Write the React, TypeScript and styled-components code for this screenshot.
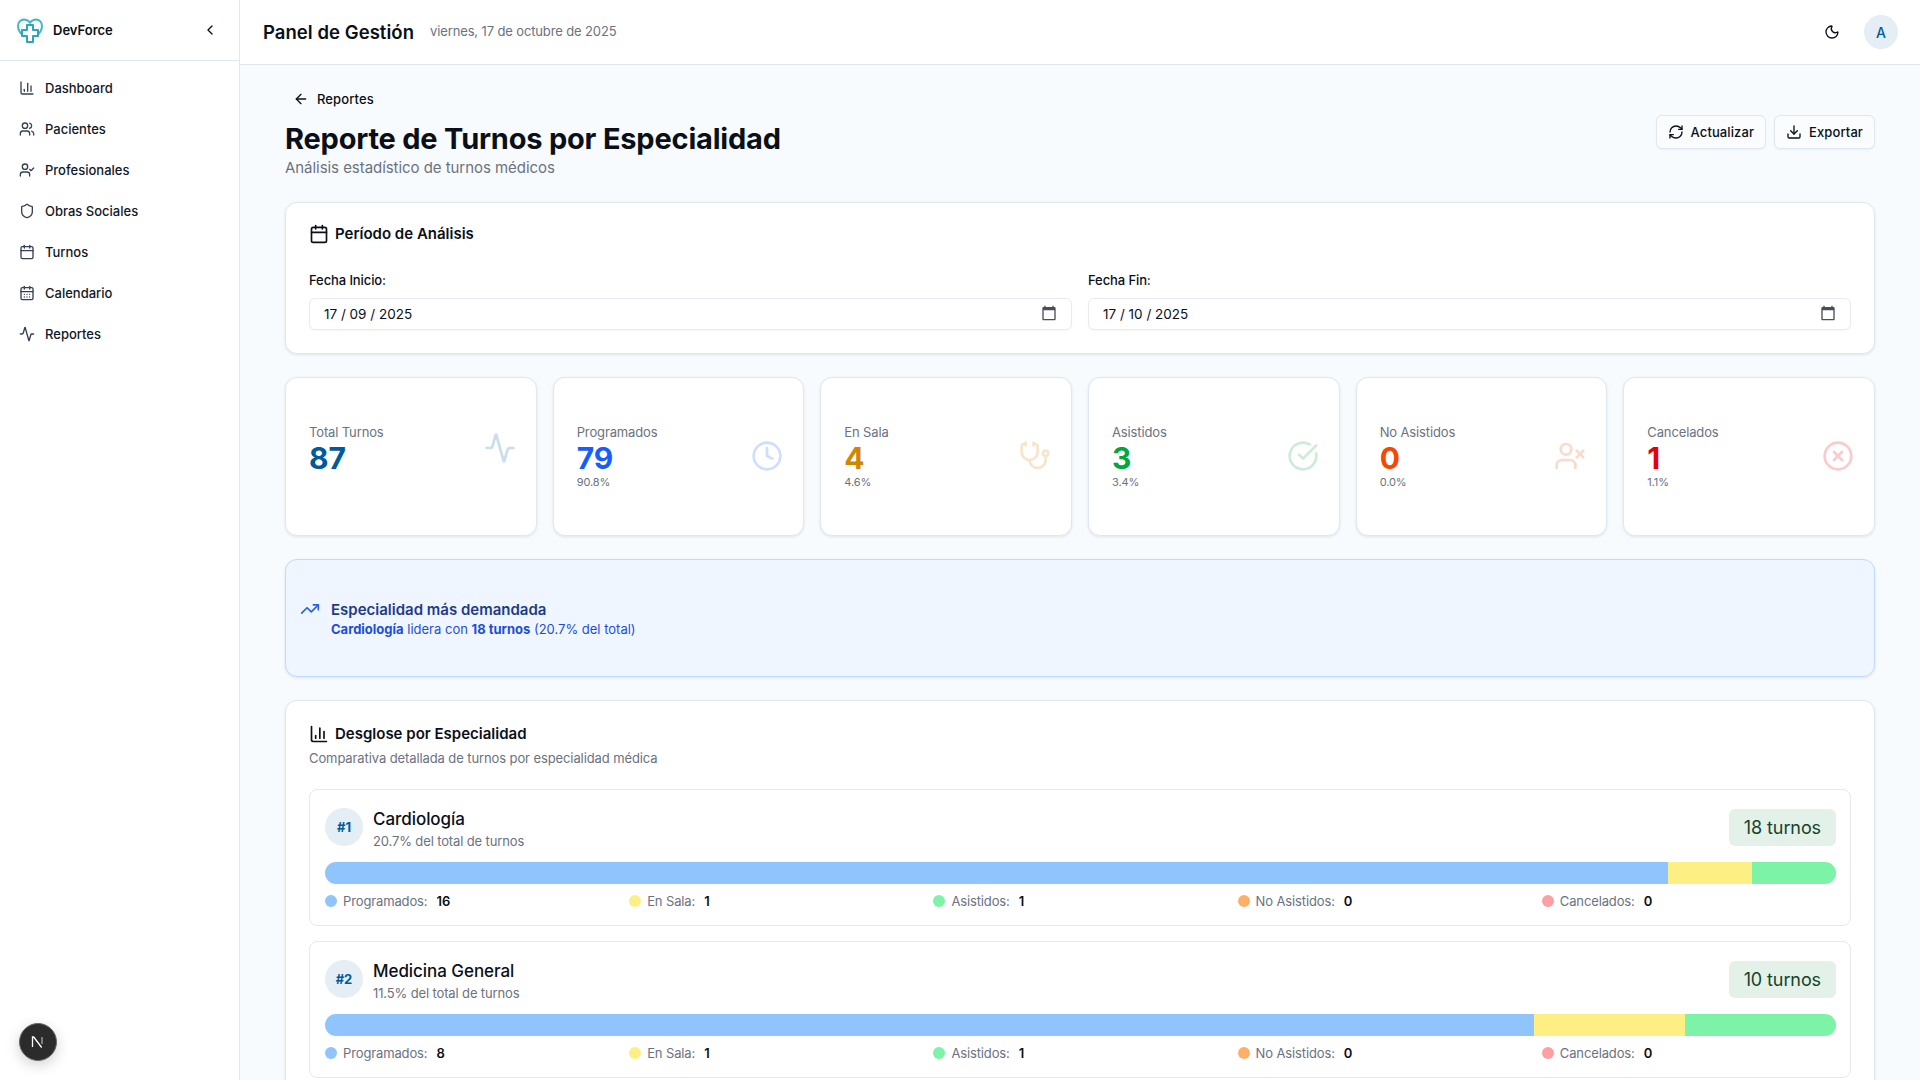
import React from 'react';
import styled, { createGlobalStyle } from 'styled-components';
import {
  Activity,
  ArrowLeft,
  Calendar,
  CalendarDays,
  ChartColumn,
  ChevronLeft,
  CircleCheckBig,
  CircleX,
  Clock,
  Download,
  LucideIcon,
  Moon,
  RefreshCw,
  Shield,
  Stethoscope,
  TrendingUp,
  UserCheck,
  Users,
  UserX,
} from 'lucide-react';

const GlobalStyle = createGlobalStyle`
  html, body {
    margin: 0;
    height: 100%;
    overflow: hidden;
    background: #f8fbfe;
    font-family: Inter, "Liberation Sans", sans-serif;
    color: #0a0f18;
  }
  * {
    box-sizing: border-box;
  }
`;

const Layout = styled.div`
  display: flex;
  height: 100vh;
  overflow: hidden;
`;

const Sidebar = styled.aside`
  flex: 0 0 240px;
  background: #fff;
  border-right: 1px solid #dfe7ef;
`;

const Brand = styled.div`
  height: 61px;
  padding: 0 21px 1px 16px;
  display: flex;
  align-items: center;
  border-bottom: 1px solid #dfe7ef;
`;

const BrandName = styled.span`
  margin-left: 9px;
  font-size: 13px;
  font-weight: 600;
  flex: 1;
`;

const Nav = styled.nav`
  padding: 8px;
  display: flex;
  flex-direction: column;
  gap: 4px;
`;

const NavItem = styled.a`
  height: 37px;
  padding: 0 11px;
  display: flex;
  align-items: center;
  gap: 10px;
  font-size: 13px;
  font-weight: 500;
  color: #111827;
`;

const Main = styled.div`
  flex: 1;
  min-width: 0;
  display: flex;
  flex-direction: column;
`;

const Topbar = styled.header`
  flex: 0 0 65px;
  padding: 0 22px 0 23px;
  background: #fff;
  border-bottom: 1px solid #dfe7ef;
  display: flex;
  align-items: center;
`;

const TopTitle = styled.h1`
  margin: 0;
  font-size: 18.5px;
  letter-spacing: 0.05px;
  line-height: 28px;
  font-weight: 600;
`;

const TopDate = styled.span`
  margin: -2px 0 0 16px;
  font-size: 13px;
  letter-spacing: -0.13px;
  color: #6b7280;
  flex: 1;
`;

const Avatar = styled.div`
  margin-left: 24px;
  width: 34px;
  height: 34px;
  border-radius: 50%;
  background: #e5edf5;
  color: #005a9c;
  display: flex;
  align-items: center;
  justify-content: center;
  font-size: 14px;
  font-weight: 500;
`;

const Content = styled.main`
  flex: 1;
  overflow: hidden;
  padding: 18px 45px 24px;
  display: flex;
  flex-direction: column;
  gap: 23px;

  & > * {
    flex-shrink: 0;
  }
`;

const PageHead = styled.div`
  margin-bottom: -1px;
  display: flex;
  align-items: center;
  justify-content: space-between;
`;

const BackLink = styled.a`
  width: fit-content;
  height: 32px;
  padding: 0 8px;
  display: flex;
  align-items: center;
  gap: 8px;
  font-size: 13px;
  letter-spacing: 0.1px;
  font-weight: 500;
`;

const PageTitle = styled.h2`
  margin: 6px 0 -1px;
  font-size: 29px;
  letter-spacing: -0.2px;
  line-height: 36px;
  font-weight: 700;
`;

const PageSub = styled.p`
  margin: 0;
  font-size: 15px;
  letter-spacing: -0.05px;
  line-height: 24px;
  color: #6b7280;
`;

const Actions = styled.div`
  display: flex;
  gap: 8px;
`;

const Button = styled.button`
  height: 34px;
  padding: 0 11px;
  display: inline-flex;
  align-items: center;
  gap: 7px;
  font: 500 13px Inter, sans-serif;
  letter-spacing: 0.1px;
  color: #0a0f18;
  background: #fafcfe;
  border: 1px solid #dfe7ef;
  border-radius: 6px;
  box-shadow: 0 1px 2px rgba(0, 0, 0, 0.05);
`;

const Card = styled.section`
  background: #fff;
  border: 1px solid #dfe7ef;
  border-radius: 12px;
  box-shadow: 0 1px 3px rgba(15, 40, 70, 0.1);
`;

const PeriodCard = styled(Card)`
  padding: 21px 23px 23px;
`;

const CardTitle = styled.h3`
  margin: 0;
  display: flex;
  align-items: center;
  gap: 6px;
  font-size: 15px;
  line-height: 16px;
  font-weight: 600;
`;

const DateGrid = styled.div`
  margin-top: 29px;
  display: grid;
  grid-template-columns: 1fr 1fr;
  gap: 16px;
`;

const DateLabel = styled.label`
  display: block;
  font-size: 13px;
  letter-spacing: -0.1px;
  line-height: 14px;
  font-weight: 500;
  margin-bottom: 11px;
`;

const DateInput = styled.div`
  height: 32px;
  padding: 0 14px;
  display: flex;
  align-items: center;
  justify-content: space-between;
  font-size: 13.5px;
  background: #fff;
  border: 1px solid #e6ecf2;
  border-radius: 6px;
  box-shadow: 0 1px 2px rgba(0, 0, 0, 0.04);

  svg {
    margin-top: -2px;
  }
`;

const StatGrid = styled.div`
  display: grid;
  grid-template-columns: repeat(6, 1fr);
  gap: 16px;
`;

const StatCard = styled(Card)`
  height: 159px;
  padding: 44px 20px 0 23px;
`;

const StatRow = styled.div`
  display: flex;
  align-items: center;
  justify-content: space-between;
`;

const StatLabel = styled.div`
  font-size: 13px;
  letter-spacing: -0.13px;
  line-height: 20px;
  color: #6b7280;
`;

const StatValue = styled.div<{ $color: string }>`
  font-size: 30px;
  line-height: 32px;
  font-weight: 700;
  color: ${({ $color }) => $color};
`;

const StatPct = styled.div`
  font-size: 11px;
  letter-spacing: -0.1px;
  line-height: 16px;
  color: #6b7280;
`;

const StatIcon = styled.span<{ $color: string }>`
  display: flex;
  color: ${({ $color }) => $color};
  opacity: 0.2;
`;

const Highlight = styled.section`
  height: 118px;
  padding: 0 14px;
  display: flex;
  align-items: center;
  gap: 11px;
  background: #eff6ff;
  border: 1px solid #bfdbfe;
  border-radius: 12px;
  box-shadow: 0 1px 3px rgba(15, 40, 70, 0.1);
  color: #2563eb;
`;

const HighlightIconWrap = styled.span`
  display: flex;
  align-self: flex-start;
  margin-top: 39px;
`;

const HighlightTitle = styled.div`
  font-size: 15px;
  line-height: 24px;
  font-weight: 600;
  color: #1e3a8a;
`;

const HighlightText = styled.div`
  font-size: 13px;
  line-height: 20px;
  color: #1d4ed8;
  margin-top: -3px;

  strong {
    font-weight: 700;
  }
`;

const BreakdownCard = styled(Card)`
  padding: 23px;
`;

const BreakdownSub = styled.p`
  margin: 4px 0 0;
  font-size: 13px;
  letter-spacing: -0.1px;
  line-height: 20px;
  color: #6b7280;
`;

const RowList = styled.div`
  margin-top: 21px;
  display: flex;
  flex-direction: column;
  gap: 15px;
`;

const SpecialtyRow = styled.article`
  padding: 15px 14px 15px 15px;
  border: 1px solid #e5e9ef;
  border-radius: 8px;
  height: 137px;
`;

const RowHead = styled.div`
  height: 44px;
  display: flex;
  align-items: center;
  gap: 10px;
`;

const Rank = styled.div`
  flex: 0 0 38px;
  height: 38px;
  border-radius: 50%;
  background: #e5edf5;
  color: #005a9c;
  display: flex;
  align-items: center;
  justify-content: center;
  font-size: 13px;
  font-weight: 700;
`;

const RowInfo = styled.div`
  flex: 1;
  margin-top: 3px;
`;

const RowName = styled.div`
  font-size: 17px;
  letter-spacing: -0.05px;
  line-height: 24px;
  font-weight: 500;
`;

const RowShare = styled.div`
  font-size: 13px;
  letter-spacing: -0.13px;
  line-height: 20px;
  color: #6b7280;
`;

const CountBadge = styled.div`
  height: 37px;
  padding: 0 15px;
  display: flex;
  align-items: center;
  font-size: 18px;
  letter-spacing: -0.1px;
  color: #14432a;
  background: #e3f1e9;
  border-radius: 6px;
`;

const Bar = styled.div`
  margin-top: 13px;
  height: 22px;
  display: flex;
  overflow: hidden;
  border-radius: 11px;
`;

const BarSegment = styled.div<{ $color: string }>`
  background: ${({ $color }) => $color};
`;

const Legend = styled.div`
  margin-top: 7px;
  display: grid;
  grid-template-columns: repeat(5, 1fr);
  gap: 10px;
`;

const LegendItem = styled.div`
  display: flex;
  align-items: center;
  font-size: 13px;
  letter-spacing: -0.13px;
  line-height: 20px;
  color: #6b7280;
`;

const Dot = styled.span<{ $color: string }>`
  width: 12px;
  height: 12px;
  margin-right: 6px;
  border-radius: 50%;
  background: ${({ $color }) => $color};
`;

const LegendValue = styled.strong`
  margin-left: 9px;
  font-weight: 600;
  letter-spacing: 0;
  color: #0a0f18;
`;

const DevBadge = styled.div`
  position: fixed;
  left: 19px;
  bottom: 19px;
  width: 38px;
  height: 38px;
  border-radius: 50%;
  background: #2b2b2b;
  border: 1px solid #666;
  box-shadow: 0 4px 14px rgba(0, 0, 0, 0.18);
  display: flex;
  align-items: center;
  justify-content: center;
`;

const navItems: [LucideIcon, string][] = [
  [ChartColumn, 'Dashboard'],
  [Users, 'Pacientes'],
  [UserCheck, 'Profesionales'],
  [Shield, 'Obras Sociales'],
  [Calendar, 'Turnos'],
  [CalendarDays, 'Calendario'],
  [Activity, 'Reportes'],
];

const stats: { label: string; value: number; pct?: string; color: string; icon: LucideIcon }[] = [
  { label: 'Total Turnos', value: 87, color: '#005a9c', icon: Activity },
  { label: 'Programados', value: 79, pct: '90.8%', color: '#155dfc', icon: Clock },
  { label: 'En Sala', value: 4, pct: '4.6%', color: '#d08700', icon: Stethoscope },
  { label: 'Asistidos', value: 3, pct: '3.4%', color: '#00a63e', icon: CircleCheckBig },
  { label: 'No Asistidos', value: 0, pct: '0.0%', color: '#f54900', icon: UserX },
  { label: 'Cancelados', value: 1, pct: '1.1%', color: '#e7000b', icon: CircleX },
];

const statuses = [
  { label: 'Programados', color: '#8fc4fd' },
  { label: 'En Sala', color: '#feef85' },
  { label: 'Asistidos', color: '#7df3a8' },
  { label: 'No Asistidos', color: '#ffb066' },
  { label: 'Cancelados', color: '#ff9fa3' },
];

const specialties = [
  { name: 'Cardiología', share: '20.7%', total: 18, counts: [16, 1, 1, 0, 0] },
  { name: 'Medicina General', share: '11.5%', total: 10, counts: [8, 1, 1, 0, 0] },
];

const PickerIcon: React.FC = () => (
  <svg width="16" height="16" viewBox="0 0 24 24" fill="#4a4f57">
    <path d="M20 3h-1V1h-2v2H7V1H5v2H4c-1.1 0-2 .9-2 2v16c0 1.1.9 2 2 2h16c1.1 0 2-.9 2-2V5c0-1.1-.9-2-2-2zm0 18H4V8h16v13z" />
  </svg>
);

const Logo: React.FC = () => (
  <svg width="28" height="28" viewBox="0 0 28 28" fill="none">
    <rect width="28" height="28" rx="4" fill="#fbfcf8" />
    <path
      d="M7.5 20C4 17 2 14 2 10 2 6.4 4.6 3.5 8 3.5c2.6 0 4.6 1.2 6 3.2 1.4-2 3.4-3.2 6-3.2 3.4 0 6 2.9 6 6.5 0 4-2 7-5.5 10"
      stroke="#46b7c8"
      strokeWidth="2"
      strokeLinecap="round"
    />
    <path
      d="M11 9h6v5h5v6h-5v6h-6v-6H6v-6h5z"
      fill="#fff"
      stroke="#2fa5b8"
      strokeWidth="2"
      strokeLinejoin="round"
    />
  </svg>
);

const DevLogo: React.FC = () => (
  <svg width="16" height="16" viewBox="0 0 16 16" fill="none">
    <path d="M2.5 13V3h1.2l8 10.5" stroke="#fff" strokeWidth="1.3" />
    <path d="M12 3v7" stroke="#aaa" strokeWidth="1.3" />
  </svg>
);

const App: React.FC = () => (
  <Layout>
    <GlobalStyle />
    <Sidebar>
      <Brand>
        <Logo />
        <BrandName>DevForce</BrandName>
        <ChevronLeft size={16} />
      </Brand>
      <Nav>
        {navItems.map(([Icon, label]) => (
          <NavItem key={label}>
            <Icon size={16} color="#374151" />
            {label}
          </NavItem>
        ))}
      </Nav>
    </Sidebar>
    <Main>
      <Topbar>
        <TopTitle>Panel de Gestión</TopTitle>
        <TopDate>viernes, 17 de octubre de 2025</TopDate>
        <Moon size={16} />
        <Avatar>A</Avatar>
      </Topbar>
      <Content>
        <PageHead>
          <div>
            <BackLink>
              <ArrowLeft size={16} />
              Reportes
            </BackLink>
            <PageTitle>Reporte de Turnos por Especialidad</PageTitle>
            <PageSub>Análisis estadístico de turnos médicos</PageSub>
          </div>
          <Actions>
            <Button>
              <RefreshCw size={16} />
              Actualizar
            </Button>
            <Button>
              <Download size={16} />
              Exportar
            </Button>
          </Actions>
        </PageHead>

        <PeriodCard>
          <CardTitle>
            <Calendar size={20} />
            Período de Análisis
          </CardTitle>
          <DateGrid>
            <div>
              <DateLabel>Fecha Inicio:</DateLabel>
              <DateInput>
                17 / 09 / 2025
                <PickerIcon />
              </DateInput>
            </div>
            <div>
              <DateLabel>Fecha Fin:</DateLabel>
              <DateInput>
                17 / 10 / 2025
                <PickerIcon />
              </DateInput>
            </div>
          </DateGrid>
        </PeriodCard>

        <StatGrid>
          {stats.map(({ label, value, pct, color, icon: Icon }) => (
            <StatCard key={label}>
              <StatRow>
                <div>
                  <StatLabel>{label}</StatLabel>
                  <StatValue $color={color}>{value}</StatValue>
                  {pct && <StatPct>{pct}</StatPct>}
                </div>
                <StatIcon $color={color}>
                  <Icon size={32} />
                </StatIcon>
              </StatRow>
            </StatCard>
          ))}
        </StatGrid>

        <Highlight>
          <HighlightIconWrap>
            <TrendingUp size={20} />
          </HighlightIconWrap>
          <div>
            <HighlightTitle>Especialidad más demandada</HighlightTitle>
            <HighlightText>
              <strong>Cardiología</strong> lidera con <strong>18 turnos</strong> (20.7% del total)
            </HighlightText>
          </div>
        </Highlight>

        <BreakdownCard>
          <CardTitle>
            <ChartColumn size={20} />
            Desglose por Especialidad
          </CardTitle>
          <BreakdownSub>Comparativa detallada de turnos por especialidad médica</BreakdownSub>
          <RowList>
            {specialties.map(({ name, share, total, counts }, i) => (
              <SpecialtyRow key={name}>
                <RowHead>
                  <Rank>#{i + 1}</Rank>
                  <RowInfo>
                    <RowName>{name}</RowName>
                    <RowShare>{share} del total de turnos</RowShare>
                  </RowInfo>
                  <CountBadge>{total} turnos</CountBadge>
                </RowHead>
                <Bar>
                  {statuses.map(({ label, color }, s) => (
                    <BarSegment key={label} $color={color} style={{ width: `${(counts[s] / total) * 100}%` }} />
                  ))}
                </Bar>
                <Legend>
                  {statuses.map(({ label, color }, s) => (
                    <LegendItem key={label}>
                      <Dot $color={color} />
                      {label}:<LegendValue>{counts[s]}</LegendValue>
                    </LegendItem>
                  ))}
                </Legend>
              </SpecialtyRow>
            ))}
          </RowList>
        </BreakdownCard>
      </Content>
    </Main>
    <DevBadge>
      <DevLogo />
    </DevBadge>
  </Layout>
);

export default App;
